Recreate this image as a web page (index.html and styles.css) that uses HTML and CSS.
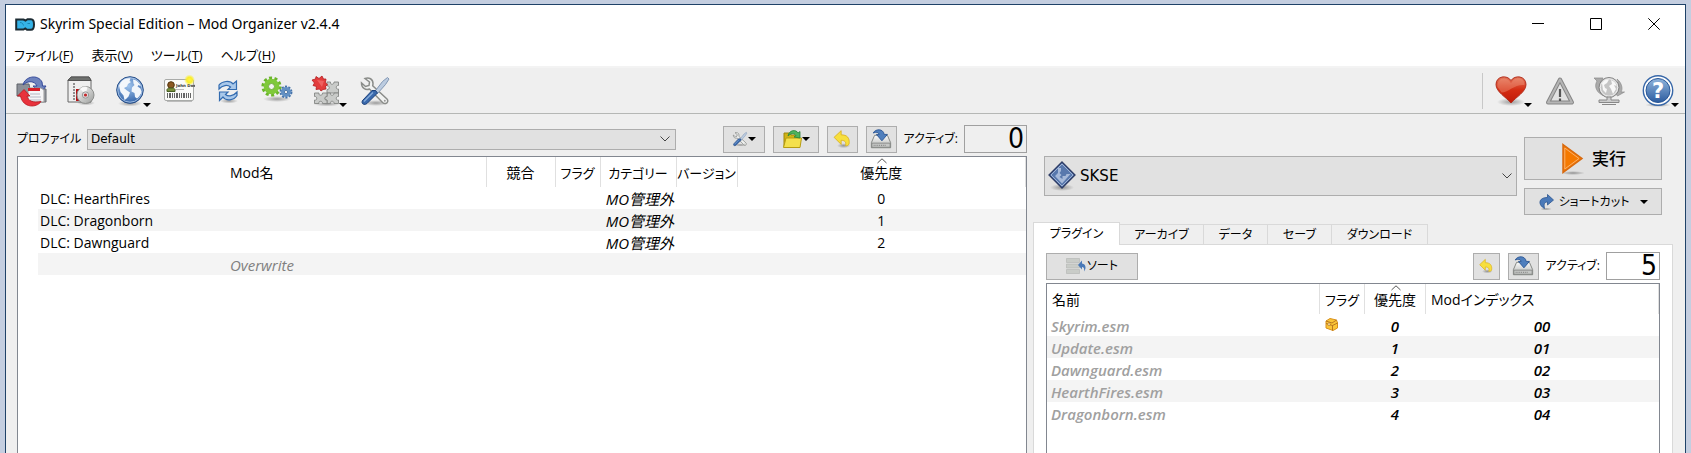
FILE: index.html
```
<!DOCTYPE html>
<html lang="ja">
<head>
<meta charset="utf-8">
<title>Skyrim Special Edition – Mod Organizer v2.4.4</title>
<link rel="stylesheet" href="styles.css">
</head>
<body>
<svg class="defs" aria-hidden="true">
  <defs>
    <linearGradient id="gSteel" x1="0" y1="0" x2="1" y2="1"><stop offset="0" stop-color="#fdfdfd"/><stop offset="1" stop-color="#9a9c9a"/></linearGradient>
    <linearGradient id="gBlue" x1="0" y1="0" x2="0" y2="1"><stop offset="0" stop-color="#8fb4dc"/><stop offset="1" stop-color="#2d5c9f"/></linearGradient>
    <linearGradient id="gRed" x1="0" y1="0" x2="0" y2="1"><stop offset="0" stop-color="#e4775c"/><stop offset=".5" stop-color="#d42c12"/><stop offset="1" stop-color="#c01a08"/></linearGradient>
    <radialGradient id="gGlobe" cx=".45" cy=".35" r=".7"><stop offset="0" stop-color="#9fc3ec"/><stop offset="1" stop-color="#2c5da4"/></radialGradient>
    <radialGradient id="gGlow"><stop offset="0" stop-color="#fff34a"/><stop offset=".5" stop-color="#fbee2a"/><stop offset="1" stop-color="#fbee2a" stop-opacity="0"/></radialGradient>
    <radialGradient id="gShade"><stop offset="0" stop-color="#000" stop-opacity=".35"/><stop offset="1" stop-color="#000" stop-opacity="0"/></radialGradient>
    <linearGradient id="gDrive" x1="0" y1="0" x2="0" y2="1"><stop offset="0" stop-color="#fafafa"/><stop offset="1" stop-color="#b4b6b4"/></linearGradient>
    <symbol id="tools" viewBox="0 0 32 32">
      <ellipse cx="17" cy="28" rx="13" ry="3" fill="url(#gShade)"/>
      <path d="M6 3.500c4-1.500 8 .5 8 5 0 1-.2 1.700-.3 2.300L28 24c1.500 1.500.8 4-1.200 4.500-1.200.3-2.200 0-3-.8L10.500 14c-4 1.500-8-1-8-6l4 3.500 3.500-1 .5-3.500z" fill="#f1f2f1" stroke="#8a8c89" stroke-width="1.500"/>
      <circle cx="25.800" cy="25.800" r="1" fill="#999"/>
      <path d="M23.500 6.500 28.500 2.500 30 4l-3.500 5.500-8 9-2.500-2.200z" fill="#bccce0" stroke="#8297b4" stroke-width="1"/>
      <path d="M16.500 15.500 18.500 18 8 28.500c-2 1.600-4.800 1-5-1.200 0-1 .4-1.700 1-2.300L13 15.500z" fill="#3a69ac" stroke="#1d427c" stroke-width="1"/>
      <path d="M5 26.500l9-9" stroke="#86abda" stroke-width="1.400"/>
    </symbol>
    <symbol id="undo" viewBox="0 0 24 24">
      <ellipse cx="14" cy="20" rx="8" ry="3" fill="url(#gShade)"/>
      <path d="M11 2v5c7 0 10.500 3.500 9.500 11-.5 1.500-2.500 2.500-4.500 2 1.500-4-.3-6.300-5-6.500v5L2.500 10z" fill="#f7df3d" stroke="#d9ae1e" stroke-width="1"/>
    </symbol>
    <symbol id="drive" viewBox="0 0 24 24">
      <path d="M5 8h14l3.500 8v5.500h-21V16z" fill="url(#gDrive)" stroke="#7d807d"/>
      <path d="M2 16.500h20v4.500H2z" fill="#c5c7c5" stroke="#858885"/>
      <path d="M4 19h14" stroke="#888" stroke-width="1.500" stroke-dasharray="1 1"/>
      <path d="M3.500 5.500C6 .5 14.500.5 15.500 7H19l-6 7-6-7h3C9.500 4.500 6.500 4 3.500 5.500z" fill="#4f7fbd" stroke="#234f8f" stroke-width=".9"/>
    </symbol>
    <symbol id="chev" viewBox="0 0 10 6"><path d="M.5.5 5 5 9.500.5" fill="none" stroke="#444"/></symbol>
    <symbol id="sort" viewBox="0 0 10 6"><path d="M.5 5 5 .8 9.500 5" fill="none" stroke="#555"/></symbol>
    <symbol id="down" viewBox="0 0 8 4"><path d="M0 0h8L4 4z"/></symbol>
  </defs>
</svg>
<div class="window">
  <header class="titlebar">
    <svg class="app-icon" viewBox="0 0 20 13"><path d="M1.200 1.500H8.500l2 1 2-1.300h3.500c2 0 3 2.500 3 5.300s-1 5.300-3 5.300h-4l-1.800-1.300-1.700 1H1.200z" fill="#35b3e8" stroke="#1c2b33" stroke-width="2"/><path d="M5 4.500c2 0 3 1 3.500 3M12.500 5.500h2.500" stroke="#1b86b6" fill="none"/></svg>
    <h1 class="title">Skyrim Special Edition – Mod Organizer v2.4.4</h1>
    <div class="controls">
      <button aria-label="最小化"><svg viewBox="0 0 12 12"><path d="M0 5.500h12"/></svg></button>
      <button aria-label="最大化"><svg viewBox="0 0 12 12"><path d="M.5.5h11v11H.5z"/></svg></button>
      <button aria-label="閉じる"><svg viewBox="0 0 12 12"><path d="M.3.300l11.400 11.400M11.700.300.3 11.700"/></svg></button>
    </div>
  </header>
  <nav class="menubar">
    <button>ファイル(<u>F</u>)</button><button>表示(<u>V</u>)</button><button>ツール(<u>T</u>)</button><button>ヘルプ(<u>H</u>)</button>
  </nav>
  <div class="toolbar" role="toolbar">
    <button aria-label="インスタンス"><svg viewBox="0 0 32 32">
      <path d="M1 9h12l2 12H1z" fill="#8c9098" stroke="#5f6268"/><path d="M18 14h12v13H18z" fill="#9b9ea6" stroke="#666a70"/>
      <path d="M7 10C9 1 22-1 26 7l.5 4H30l-5.500 7.500L17 11h4C19 6 12 5 7 10z" fill="#6d82bd" stroke="#34499a" stroke-width="1"/>
      <path d="M12 13h13l3 2v12H12z" fill="#f5f5f7" stroke="#999"/><path d="M12 13h12v3H12z" fill="#d51e28"/><path d="M14 19h10M14 22h11M14 25h11" stroke="#b5b7c4"/>
      <path d="M1.500 21 8 14.500l6 6.500h-3c1 5 6 7 14 5.500-4 6.500-18 7-20.500-5.500z" fill="#e8323c" stroke="#b91820" stroke-width=".8"/></svg></button>
    <button aria-label="Modをインストール"><svg viewBox="0 0 32 32">
      <path d="M3 5 6 2h18l2 3v22H3z" fill="#efefef" stroke="#666"/><path d="M3 5.500 6 2h18l2 3.500z" fill="#6e706e" stroke="#555"/>
      <path d="M9 8v18" stroke="#333" stroke-dasharray="2 1"/><path d="M11 14h9v12h-9z" fill="#b41418"/>
      <ellipse cx="21" cy="28" rx="9" ry="2.500" fill="url(#gShade)"/><circle cx="20.500" cy="20" r="8.500" fill="url(#gSteel)" stroke="#8d8f8d"/><path d="M20.500 20 15 13.500c3-2.500 6-2 7.500-1.500z" fill="#fff" opacity=".8"/><circle cx="20.500" cy="20" r="3.200" fill="#ddd" stroke="#999"/><circle cx="20.500" cy="20" r="1.600" fill="#c4282c"/></svg></button>
    <button aria-label="Nexus"><svg viewBox="0 0 32 32">
      <ellipse cx="16" cy="28.500" rx="12" ry="3" fill="url(#gShade)"/><circle cx="16" cy="15" r="13.300" fill="url(#gGlobe)" stroke="#294f87"/><circle cx="16" cy="15" r="12.200" fill="none" stroke="#b4cdec" opacity=".8"/>
      <path d="M7 7c3-3.500 7-4 9.500-3.500l-1 2.500 1.500 1-3 2-1 2.500-3 1.500 3 2.500 3 2-1.500 4-2.500 2.500-1.500 1-1-4.500-3-3.500-1-4-.5-2.500z" fill="#f4f7fb"/>
      <path d="M19 4.500c3.500.5 7 3.500 8 7l-2.500-1.500-1 1.500 3 2 1 3c-.5 3-2.500 5.500-4.500 7L21 22l-.5-4-3-1.500.5-4 2.500-2.500-1-1.500z" fill="#f1f5fa"/></svg><svg class="drop"><use href="#down"/></svg></button>
    <button aria-label="プロファイル"><svg viewBox="0 0 32 32">
      <rect x="1.500" y="4.500" width="29" height="21" rx="1.500" fill="#fbfbf9" stroke="#a9aba9"/>
      <path d="M4 26.500h25" stroke="#bbb"/><circle cx="8" cy="10" r="3.300" fill="#8b5822" stroke="#53350f"/><path d="M4 16.500v-2c.5-2 7.500-2 8 0v2z" fill="#79903c" stroke="#455d22"/>
      <text x="13" y="11.500" class="card-name">John Doe</text><path d="M13 14.500h8" stroke="#bbb"/>
      <path d="M4 20.500h24" stroke="#666" stroke-width="5" stroke-dasharray="1 1 2 1 1 1"/><circle cx="26.500" cy="5" r="5.500" fill="url(#gGlow)"/></svg></button>
    <button aria-label="更新"><svg viewBox="0 0 32 32">
      <ellipse cx="17" cy="26" rx="9" ry="2.500" fill="url(#gShade)"/>
      <g fill="#a9c8ea" stroke="#326bb0" stroke-width="1.200"><path d="M7 14V10c3-4 11-5 14-1l3.500-3V14.500H16l2.500-2.500c-3-2.500-8-2-11.500 2z"/><path d="M25 17v3.500c-3 5-11 6-14 1.500L7.500 25.500V17H16l-2.500 2.500c3 2.500 8 1.500 11.500-2.500z"/></g></svg></button>
    <button aria-label="設定"><svg viewBox="0 0 32 32">
      <ellipse cx="16" cy="24" rx="14" ry="3" fill="url(#gShade)"/>
      <circle cx="10.500" cy="11.500" r="8.300" fill="none" stroke="#6bb52b" stroke-width="3.600" stroke-dasharray="2.900 2.315"/><circle cx="10.500" cy="11.500" r="5.400" fill="none" stroke="#7fc93a" stroke-width="4.800"/><circle cx="10.500" cy="11.500" r="3" fill="#f3f3f1" stroke="#559b1d" stroke-width=".8"/>
      <circle cx="25" cy="17" r="5.200" fill="none" stroke="#4674ab" stroke-width="2.500" stroke-dasharray="2 1.270"/><circle cx="25" cy="17" r="3.400" fill="none" stroke="#6391c4" stroke-width="3.200"/><circle cx="25" cy="17" r="1.700" fill="#eee" stroke="#34639b" stroke-width=".8"/></svg></button>
    <button aria-label="ツール"><svg viewBox="0 0 32 32">
      <ellipse cx="17" cy="29" rx="14" ry="2.500" fill="url(#gShade)"/>
      <g fill="#c9cbc9" stroke="#858785" stroke-width=".9"><path d="M17 7h3.500c-1 3 4 3 3.500 0h4.500v3.500c-3-.5-3 4.500 0 3.500V18H17v-3.500c3 .5 3-4.500 0-3.500z"/><path d="M17 18h3.500c-1 3 4 3 3.500 0h4.500v3.500c-3-.5-3 4.500 0 3.500v3.500H24c.5-3-4.500-3-3.500 0H17V25c-3 1-3-4 0-3.500z"/><path d="M4.500 18H9c-1 3 4 3 3.500 0H17v3.500c-3-.5-3 4.500 0 3.500v3.500h-4.500c.5-3-4.500-3-3.500 0H4.500V25c3 1 3-4 0-3.500z"/></g>
      <path d="M2 5 5.500 4 6 1.500 9 3.500 12 1l1.500 3L16 4l-.5 3.500 2 2.500-2 1 .5 3-3 .5-2 1.500-1.500-2-3.500.5.5-3L3 10.500 4.500 8z" fill="#e33d3c" stroke="#b41c1e" stroke-width=".8"/><path d="M7 5l7 1-2 6z" fill="#f67a78" opacity=".6"/></svg><svg class="drop"><use href="#down"/></svg></button>
    <button aria-label="実行ファイル設定"><svg><use href="#tools"/></svg></button>
    <span class="toolbar-gap"></span>
    <button aria-label="支援"><svg viewBox="0 0 32 32"><ellipse cx="16" cy="27" rx="14" ry="4" fill="url(#gShade)"/><path d="M16 28C11 22 1 17 1 9.500 1 1 12-.5 16 5.500 20-.5 31 1 31 9.500 31 17 21 22 16 28z" fill="url(#gRed)" stroke="#b33322"/><path d="M2.500 12C1.500 4 9 1 14 5.500l2 2.500 2-2.500C23 1 30 4 29.500 10 20 9 14 17 6.500 17.500z" fill="#f3a58c" opacity=".38"/></svg><svg class="drop"><use href="#down"/></svg></button>
    <button aria-label="通知"><svg viewBox="0 0 32 32"><path d="M16 4.500 28 27.500H4z" fill="#e2e2e2" stroke="#858585" stroke-width="4" stroke-linejoin="round"/><path d="M16 4.500 28 27.500H4z" fill="none" stroke="#b5b5b5" stroke-width="2" stroke-linejoin="round"/><path d="M16 14v8M16 23.500v2.500" stroke="#555" stroke-width="2.200"/></svg></button>
    <button aria-label="更新の確認"><svg viewBox="0 0 32 32"><path d="M1 3h9L8.500 6c-3 5-1 12 3 15C3 18 1 11 4 6zM24 4c5 4 6 10 4 13h3.500l-7 4-3-4.500 3 .5c2-4 1.500-9-.5-13z" fill="#aaa" stroke="#8b8b8b" stroke-width=".7"/><circle cx="16" cy="12.500" r="10" fill="#c5c5c5" stroke="#858585"/><circle cx="16" cy="12.500" r="8.700" fill="none" stroke="#eee"/><path d="M9 8c2-3 5-4 7-3.500L14 8l-3 2 1 3 2 1-1 4-3-3zM18 5c3 1 5 3 5.500 6L21 10l2 4-3 5-2-5-2-3 3-2z" fill="#f8f8f8"/><path d="M14 22h4v3h8v2.500H6V25h8zM9 29.500h14" fill="#ccc" stroke="#888"/></svg></button>
    <button aria-label="ヘルプ"><svg viewBox="0 0 32 32"><ellipse cx="16" cy="30" rx="13" ry="2" fill="url(#gShade)"/><circle cx="16" cy="15.500" r="14.700" fill="#fff" stroke="#3767a8" stroke-width="1.400"/><circle cx="16" cy="15.500" r="12" fill="url(#gBlue)" stroke="#2a5797"/><text x="16" y="23" class="help-mark">?</text></svg><svg class="drop"><use href="#down"/></svg></button>
  </div>
  <main class="main">
    <section class="left">
      <div class="profile-bar">
        <label for="profile">プロファイル</label>
        <div class="combo"><select id="profile"><option>Default</option></select><svg class="combo-arrow"><use href="#chev"/></svg></div>
        <div class="actions">
          <button class="btn wide" aria-label="一覧オプション"><svg class="i16"><use href="#tools"/></svg><svg class="tri"><use href="#down"/></svg></button>
          <button class="btn wider" aria-label="フォルダを開く"><svg class="i20" viewBox="0 0 20 20"><path d="M2 4h6l1 2h8v12H2z" fill="#d2b414" stroke="#9e860d"/><path d="M4 9h15.500l-1.500 9.500H1.500z" fill="#f4e04c" stroke="#b79c12"/><path d="M6 7C7 1 14 0 16 4l2-1.500V9l-6-1 2-1.500C12 4 9 4 6 7z" fill="#4fb45c" stroke="#26833a" stroke-width=".8"/></svg><svg class="tri"><use href="#down"/></svg></button>
          <button class="btn" aria-label="バックアップを復元"><svg class="i20"><use href="#undo"/></svg></button>
          <button class="btn" aria-label="バックアップを作成"><svg class="i22"><use href="#drive"/></svg></button>
        </div>
        <span class="active-label">アクティブ:</span>
        <output class="lcd gray">0</output>
      </div>
      <div class="list">
        <table class="mods">
          <colgroup><col class="c-indent"><col class="c-name"><col class="c-conf"><col class="c-flag"><col class="c-cat"><col class="c-ver"><col></colgroup>
          <thead><tr><th colspan="2">Mod名</th><th>競合</th><th class="kana">フラグ</th><th class="kana">カテゴリー</th><th class="kana">バージョン</th><th><svg class="sort"><use href="#sort"/></svg>優先度</th></tr></thead>
          <tbody>
            <tr><td></td><td>DLC: HearthFires</td><td></td><td></td><td class="it">MO管理外</td><td></td><td class="num">0</td></tr>
            <tr><td></td><td>DLC: Dragonborn</td><td></td><td></td><td class="it">MO管理外</td><td></td><td class="num">1</td></tr>
            <tr><td></td><td>DLC: Dawnguard</td><td></td><td></td><td class="it">MO管理外</td><td></td><td class="num">2</td></tr>
            <tr><td></td><td class="over">Overwrite</td><td></td><td></td><td></td><td></td><td></td></tr>
          </tbody>
        </table>
      </div>
    </section>
    <section class="right">
      <div class="launch">
        <div class="combo big"><select aria-label="実行ファイル"><option>SKSE</option></select>
          <svg class="skse" viewBox="0 0 28 30"><ellipse cx="14" cy="26.500" rx="12" ry="3.500" fill="url(#gShade)"/><path d="M14 1 27 14 14 27 1 14z" fill="#5878ad" stroke="#2e3d66" stroke-width="1.300"/><path d="M14 3 25 14 14 25 3 14z" fill="none" stroke="#9db2d6"/><path d="M10 7h3v3l-1.500 2 2 2-2 2 3 2v-3h3l1-2h4l-8.500 9.500L7 15l3-3z" fill="#b4c4e1" opacity=".85"/></svg>
          <svg class="combo-arrow"><use href="#chev"/></svg></div>
        <div class="launch-buttons">
          <button class="btn run"><svg viewBox="0 0 26 32"><ellipse cx="13" cy="30" rx="12" ry="2" fill="url(#gShade)"/><path d="M3 1.500 22 15.500 3 29.500z" fill="#f57900" stroke="#d76a10" stroke-width="1.500"/><path d="M4.800 5 19 15.500 4.800 26z" fill="none" stroke="#fbb06a"/></svg>実行</button>
          <button class="btn short"><svg class="i16" viewBox="0 0 16 16"><ellipse cx="8" cy="15" rx="6" ry="1.500" fill="url(#gShade)"/><path d="M9.500.500 15.500 6l-6 5V8C6.500 8 5.500 10 6.500 14.500 0 11 0 3.500 9.500 3.500z" fill="#4a79b8" stroke="#2c5590" stroke-width=".8"/></svg><span>ショートカット</span><svg class="tri"><use href="#down"/></svg></button>
        </div>
      </div>
      <div class="tabs" role="tablist">
        <button role="tab" aria-selected="true" class="tab t1">プラグイン</button><button role="tab" class="tab t2">アーカイブ</button><button role="tab" class="tab t3">データ</button><button role="tab" class="tab t3">セーブ</button><button role="tab" class="tab t4">ダウンロード</button>
      </div>
      <div class="panel">
        <div class="panel-bar">
          <button class="btn sort-btn"><svg class="i20" viewBox="0 0 20 18"><g fill="#c9ccc8" stroke="#b2b5b1" stroke-width=".6"><path d="M.5 1.500h13v4H.5zM.5 7h13v4H.5zM.5 12.500h13v4H.5z"/></g><path d="M16 3.500v3c4 .5 4.500 5 2 8 .5-3-.2-4.500-2-4.500v2.500L12 8z" fill="#4a79b8"/></svg>ソート</button>
          <span class="grow"></span>
          <button class="btn small" aria-label="復元"><svg class="i16"><use href="#undo"/></svg></button>
          <button class="btn" aria-label="保存"><svg class="i22"><use href="#drive"/></svg></button>
          <span class="active-label">アクティブ:</span>
          <output class="lcd">5</output>
        </div>
        <div class="list">
          <table class="plugins">
            <colgroup><col><col class="p-flag"><col class="p-prio"><col class="p-index"></colgroup>
            <thead><tr><th>名前</th><th class="kana">フラグ</th><th><svg class="sort"><use href="#sort"/></svg>優先度</th><th>Modインデックス</th></tr></thead>
            <tbody>
              <tr><td>Skyrim.esm</td><td><svg class="chest" viewBox="0 0 13 13"><path d="M1 3 5 .5l6.500 1.500 1 3v5L8 12.500 1 10z" fill="#fbc638" stroke="#d8901c"/><path d="M1 5.500l6.500 2 5-2.500M7.500 7.500v5M1 3l6 2 4.500-3" fill="none" stroke="#a8661c" stroke-width=".8"/><path d="M3 5h2v2.500H3z" fill="#fff0b4" stroke="#a8661c" stroke-width=".5"/></svg></td><td>0</td><td>00</td></tr>
              <tr><td>Update.esm</td><td></td><td>1</td><td>01</td></tr>
              <tr><td>Dawnguard.esm</td><td></td><td>2</td><td>02</td></tr>
              <tr><td>HearthFires.esm</td><td></td><td>3</td><td>03</td></tr>
              <tr><td>Dragonborn.esm</td><td></td><td>4</td><td>04</td></tr>
            </tbody>
          </table>
        </div>
      </div>
    </section>
  </main>
</div>
</body>
</html>
```
FILE: styles.css
```
* { box-sizing: border-box; }
body {
  margin: 0;
  height: 100vh;
  padding: 4px 5px 0;
  display: flex;
  overflow: hidden;
  background: #c4cee0;
  color: #000;
  font: 14px/20px "Open Sans", "Noto Sans CJK JP", sans-serif;
  font-feature-settings: "palt";
}
button, select { font: inherit; font-feature-settings: inherit; color: inherit; border: 0; padding: 0; margin: 0; background: none; }
svg { display: block; flex: none; }
.defs { position: absolute; width: 0; height: 0; }
.window {
  flex: 1;
  min-width: 0;
  display: flex;
  flex-direction: column;
  background: #efefef;
  border: 1px solid #1f4268;
  border-bottom: 0;
}

/* title and menu */
.titlebar { display: flex; align-items: center; height: 38px; padding: 0 2px 0 9px; background: #fff; }
.app-icon { width: 20px; height: 13px; }
.title { flex: 1; margin: 0 0 0 5px; font-family: "Noto Sans", sans-serif; font-size: 14px; font-weight: 400; }
.controls { display: flex; }
.controls button { width: 58px; height: 36px; display: grid; place-items: center; }
.controls svg { width: 12px; height: 12px; fill: none; stroke: #000; }
.menubar { display: flex; gap: 18px; height: 25px; padding-left: 8px; background: #fff; border-bottom: 2px solid #f3f3f3; }
.menubar button { font-size: 13px; }
u { text-underline-offset: 2px; }

/* toolbar */
.toolbar { display: flex; height: 46px; padding: 0 3px 0 1px; border-bottom: 1px solid #b5b7b5; }
.toolbar button { position: relative; width: 49px; display: grid; place-items: center; }
.toolbar svg { width: 32px; height: 32px; }
.toolbar .drop { position: absolute; left: 38px; bottom: 6px; width: 8px; height: 4px; }
.toolbar-gap { flex: 1; margin: 5px 3px 4px 0; border-right: 1px solid #c8c8c8; }
.card-name { font: bold 4px "DejaVu Sans", sans-serif; fill: #333; }
.help-mark { font: bold 21px "DejaVu Sans", sans-serif; fill: #fff; text-anchor: middle; }

/* shared controls */
.btn { display: flex; align-items: center; justify-content: center; width: 31px; height: 27px; background: #e1e1e1; border: 1px solid #adadad; }
.btn.wide { width: 42px; }
.btn.wider { width: 46px; gap: 0; }
.btn.small { width: 27px; }
.i16 { width: 16px; height: 16px; }
.i20 { width: 20px; height: 20px; }
.i22 { width: 22px; height: 22px; }
.tri { width: 8px; height: 4px; }
.combo { position: relative; flex: 1; min-width: 0; }
.combo select { appearance: none; display: block; width: 100%; height: 21px; padding: 0 3px; background: #e1e1e1; border: 1px solid #adadad; font: 12px "DejaVu Sans", sans-serif; }
.combo-arrow { position: absolute; right: 6px; top: 50%; width: 10px; height: 6px; margin-top: -3px; pointer-events: none; }
.combo.big select { height: 40px; padding-left: 35px; font-size: 15px; }
.combo.big .combo-arrow { right: 5px; }
.skse { position: absolute; left: 4px; top: 5px; width: 28px; height: 30px; }
.lcd { width: 63px; height: 28px; padding: 0 2px; border: 1px solid #a0a0a0; background: #fff; font: 28px/26px "Liberation Sans Narrow", "DejaVu Sans Condensed", sans-serif; text-align: right; }
.lcd.gray { background: #efefef; }
.active-label { font-size: 12px; margin: 0 6px 0 7px; white-space: nowrap; }
.grow { flex: 1; }

/* panes */
.main { flex: 1; min-height: 0; display: grid; grid-template-columns: minmax(0, 1010fr) minmax(0, 640fr); gap: 6px; padding: 0 12px 0 11px; }
.left, .right { display: flex; flex-direction: column; min-height: 0; }
.profile-bar { display: flex; align-items: center; height: 28px; margin: 11px 0 3px; }
.profile-bar label { font-size: 12px; width: 70px; }
.actions { display: flex; gap: 8px; margin-left: 47px; }
.list { flex: 1; min-height: 0; overflow: hidden; background: #fff; border: 1px solid #828790; border-bottom: 0; }
table { width: 100%; table-layout: fixed; border-collapse: collapse; }
th { position: relative; height: 30px; padding: 2px 0 0; font-weight: 400; border-right: 1px solid #e0e0e0; white-space: nowrap; }
.kana { font-size: 13px; }
td { height: 22px; padding: 2px 2px 0; white-space: nowrap; line-height: 20px; }
.sort { position: absolute; left: 50%; top: 1px; width: 10px; height: 6px; margin-left: -4px; }
.c-indent { width: 20px; }
.c-name { width: 448px; }
.c-conf { width: 69px; }
.c-flag { width: 45px; }
.c-cat { width: 76px; }
.c-ver { width: 61px; }
.mods tbody tr:nth-child(even) td:not(:first-child), .plugins tbody tr:nth-child(even) td { background: #f4f4f4; }
.it, .over { font-style: italic; }
.it { font-size: 15px; text-align: right; }
.num, .over { text-align: center; }
.over { font-size: 15px; color: #808080; }

/* right pane */
.launch { display: flex; align-items: flex-start; gap: 7px; height: 108px; padding: 23px 11px 0 11px; }
.launch .combo { margin-top: 19px; }
.launch-buttons { display: grid; gap: 8px; width: 138px; }
.launch-buttons .btn { width: 100%; }
.launch-buttons .run { height: 43px; gap: 6px; font-size: 17px; font-weight: 500; }
.run svg { width: 26px; height: 32px; }
.launch-buttons .short { gap: 5px; font-size: 12px; }
.short .tri { margin-left: 6px; }
.tabs { display: flex; align-items: flex-end; height: 22px; }
.tab { height: 20px; border: 1px solid #d9d9d9; border-width: 1px 1px 0 0; font-size: 12px; }
.tab[aria-selected] { height: 23px; margin-bottom: -1px; border-left-width: 1px; background: #fff; z-index: 1; }
.t1 { width: 87px; }
.t2 { width: 84px; }
.t3 { width: 64px; }
.t4 { width: 96px; }
.panel { flex: 1; min-height: 0; display: flex; flex-direction: column; padding: 7px 12px 0; background: #fff; border: 1px solid #d9d9d9; border-bottom: 0; }
.panel-bar { display: flex; align-items: center; height: 28px; margin-bottom: 3px; }
.panel-bar .small { margin-right: 8px; }
.panel-bar .lcd { width: 54px; }
.sort-btn { width: 92px; font-size: 12px; gap: 1px; }
.p-flag { width: 45px; }
.p-prio { width: 61px; }
.p-index { width: 233px; }
.plugins th:first-child, .plugins th:last-child { text-align: left; padding-left: 5px; }
.plugins td { text-align: center; font-size: 15px; font-style: italic; font-weight: 600; }
.plugins td:first-child { padding-left: 4px; text-align: left; color: #a0a0a0; }
.chest { width: 13px; height: 13px; margin: -3px 0 0 3px; }
```
